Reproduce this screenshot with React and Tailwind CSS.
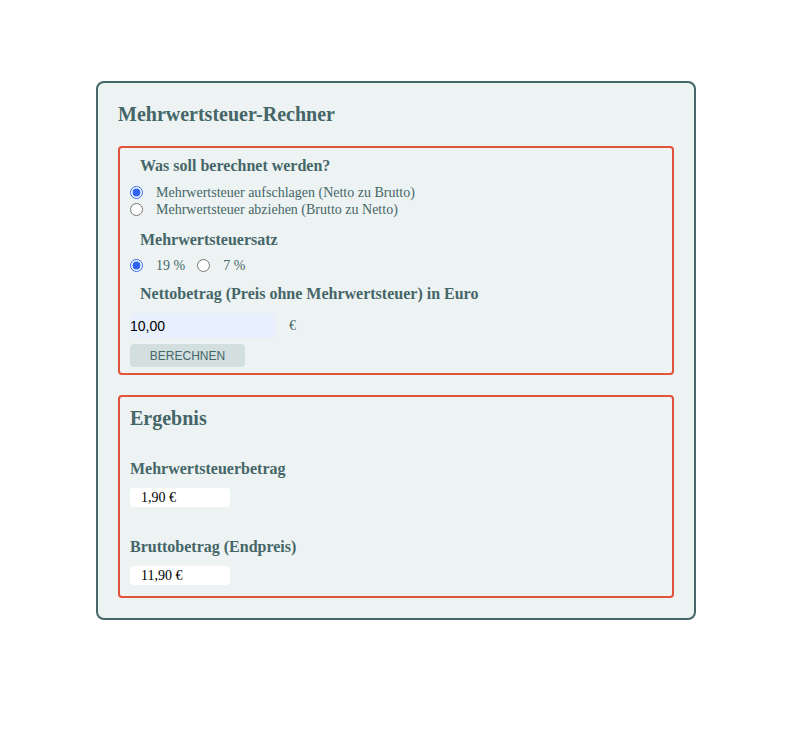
import { useState } from 'react';

export default function App() {
    const [mode, setMode] = useState('add');
    const [rate, setRate] = useState('19');
    const [net, setNet] = useState('10,00');

    const serif = { fontFamily: '"Liberation Serif", "Times New Roman", serif' };

    return (
        <div className="min-h-[737px] bg-white pt-[81px]" style={serif}>
            <div className="ml-[96px] w-[600px] rounded-lg border-2 border-[#456669] bg-[#edf3f2] p-5 text-[#456669]">
                <h2 className="text-[20px] font-bold leading-[23px]">Mehrwertsteuer-Rechner</h2>

                {/* Eingabe */}
                <div className="mt-5 rounded border-2 border-[#e1533a] px-[10px] pt-[9px] pb-[6px]">
                    <h3 className="ml-[10px] text-[16px] font-bold leading-[18px]">Was soll berechnet werden?</h3>
                    <div className="mt-[9px] text-[14px] leading-[17px]">
                        <label className="flex items-center gap-[13px]">
                            <input type="radio" name="mode" className="m-0 h-[13px] w-[13px] accent-[#2e63f6]"
                                checked={mode === 'add'} onChange={() => setMode('add')} />
                            Mehrwertsteuer aufschlagen (Netto zu Brutto)
                        </label>
                        <label className="flex items-center gap-[13px]">
                            <input type="radio" name="mode" className="m-0 h-[13px] w-[13px] accent-[#2e63f6]"
                                checked={mode === 'sub'} onChange={() => setMode('sub')} />
                            Mehrwertsteuer abziehen (Brutto zu Netto)
                        </label>
                    </div>

                    <h3 className="ml-[10px] mt-[13px] text-[16px] font-bold leading-[18px]">Mehrwertsteuersatz</h3>
                    <div className="mt-[8px] flex items-center gap-[12px] text-[14px] leading-[17px]">
                        <label className="flex items-center gap-[13px]">
                            <input type="radio" name="rate" className="m-0 h-[13px] w-[13px] accent-[#2e63f6]"
                                checked={rate === '19'} onChange={() => setRate('19')} />
                            19 %
                        </label>
                        <label className="flex items-center gap-[13px]">
                            <input type="radio" name="rate" className="m-0 h-[13px] w-[13px] accent-[#2e63f6]"
                                checked={rate === '7'} onChange={() => setRate('7')} />
                            7 %
                        </label>
                    </div>

                    <h3 className="ml-[10px] mt-[11px] text-[16px] font-bold leading-[18px]">Nettobetrag (Preis ohne Mehrwertsteuer) in Euro</h3>
                    <div className="mt-[10px] flex items-center gap-[13px]">
                        <input value={net} onChange={(e) => setNet(e.target.value)}
                            className="h-[25px] w-[146px] rounded bg-[#e8effd] px-0 text-[14px] text-black outline-none"
                            style={{ fontFamily: '"Liberation Sans", Arial, sans-serif' }} />
                        <span className="text-[14px]">€</span>
                    </div>
                    <button className="mt-[6px] h-[23px] w-[115px] rounded bg-[#d3dfdf] text-[12px] text-[#456669]"
                        style={{ fontFamily: '"Liberation Sans", Arial, sans-serif' }}>
                        BERECHNEN
                    </button>
                </div>

                {/* Ergebnis */}
                <div className="mt-5 rounded border-2 border-[#e1533a] px-[10px] pt-[10px] pb-[11px]">
                    <h2 className="text-[20px] font-bold leading-[23px]">Ergebnis</h2>

                    <h3 className="mt-[30px] text-[16px] font-bold leading-[18px]">Mehrwertsteuerbetrag</h3>
                    <div className="mt-[10px] flex h-[19px] w-[100px] items-center rounded bg-white pl-[11px] text-[14px] text-black">
                        1,90 €
                    </div>

                    <h3 className="mt-[31px] text-[16px] font-bold leading-[18px]">Bruttobetrag (Endpreis)</h3>
                    <div className="mt-[10px] flex h-[19px] w-[100px] items-center rounded bg-white pl-[11px] text-[14px] text-black">
                        11,90 €
                    </div>
                </div>
            </div>
        </div>
    );
}
